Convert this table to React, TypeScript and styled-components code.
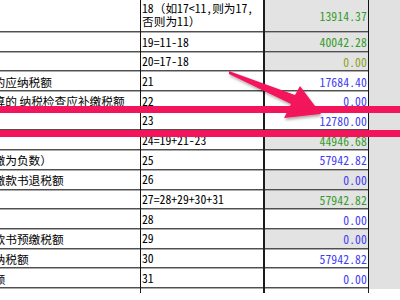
import React from "react";
import styled, { createGlobalStyle } from "styled-components";

const Global = createGlobalStyle`
  html, body { margin: 0; padding: 0; background: #ffffff; overflow: hidden; }
  #root { width: 400px; height: 300px; }
`;

const FONT = `"Noto Sans CJK SC", "Noto Sans", sans-serif`;

const Viewport = styled.div`
  position: relative;
  width: 400px;
  height: 300px;
  overflow: hidden;
  background: #ffffff;
`;

const Sheet = styled.div`
  display: flex;
  flex-direction: column;
  width: 504px;
  margin-left: -104px;
  margin-top: -1px;
  font-family: ${FONT};
  font-size: 11.7px;
  color: #000;
`;

const Row = styled.div<{ $h: number }>`
  display: grid;
  grid-template-columns: 245px 124px 104px 1fr;
  height: ${(p) => p.$h}px;
`;

const Cell = styled.div`
  box-sizing: border-box;
  display: flex;
  align-items: center;
  overflow: hidden;
  white-space: nowrap;
  box-shadow: inset 0 -1px 0 #ababab, inset 0 -2px 0 #4f4f4f;
  padding-bottom: 2px;
`;

const LabelCell = styled(Cell)`
  padding-left: 4px;
  border-right: 1px solid #141414;
`;

const CodeCell = styled(Cell)`
  padding-left: 1px;
  border-right: 2px solid #1c1c1c;
  white-space: pre-line;
  line-height: 12.6px;
  font-feature-settings: "hwid" 1;
`;

const Wide = styled.span`
  font-feature-settings: normal;
`;

const ValueCell = styled(Cell)<{ $shaded: boolean; $tone: string }>`
  justify-content: flex-end;
  padding-right: 1px;
  border-right: 1px solid #141414;
  background: ${(p) => (p.$shaded ? "#e3e3e3" : "#ffffff")};
  color: ${(p) => p.$tone};
  font-feature-settings: "hwid" 1;
  letter-spacing: 0.1px;
`;

const RestCell = styled.div`
  background: #e1e1e1;
`;

const TailRow = styled.div`
  display: grid;
  grid-template-columns: 245px 124px 104px 1fr;
  height: 4px;
`;

const TailCell = styled.div<{ $w: number }>`
  border-right: ${(p) => p.$w}px solid #1c1c1c;
`;

const Overlay = styled.svg`
  position: absolute;
  left: 0;
  top: 0;
  width: 400px;
  height: 300px;
  pointer-events: none;
`;

const GREEN = "#349b2c";
const OLIVE = "#8f9f1e";
const BLUE = "#3d3df2";

type RowData = {
  label: string;
  code: string;
  value: string;
  tone: string;
  shaded?: boolean;
  tall?: boolean;
};

const rows: RowData[] = [
  { label: "实际抵扣税额", code: "18（如17<11,则为17,\n否则为11）", value: "13914.37", tone: GREEN, shaded: true, tall: true },
  { label: "应纳税额", code: "19=11-18", value: "40042.28", tone: GREEN, shaded: true },
  { label: "期末留抵税额", code: "20=17-18", value: "0.00", tone: OLIVE, shaded: true },
  { label: "简易计税办法计算的应纳税额", code: "21", value: "17684.40", tone: BLUE },
  { label: "按简易计税办法计算的 纳税检查应补缴税额", code: "22", value: "0.00", tone: BLUE },
  { label: "应纳税额减征额", code: "23", value: "12780.00", tone: BLUE },
  { label: "应纳税额合计", code: "24=19+21-23", value: "44946.68", tone: GREEN, shaded: true },
  { label: "期初未缴税额（多缴为负数）", code: "25", value: "57942.82", tone: BLUE },
  { label: "实收出口开具专用缴款书退税额", code: "26", value: "0.00", tone: BLUE, shaded: true },
  { label: "本期已缴税额", code: "27=28+29+30+31", value: "57942.82", tone: GREEN, shaded: true },
  { label: "①分次预缴税额", code: "28", value: "0.00", tone: BLUE },
  { label: "②出口开具专用缴款书预缴税额", code: "29", value: "0.00", tone: BLUE, shaded: true },
  { label: "③本期缴纳上期应纳税额", code: "30", value: "57942.82", tone: BLUE },
  { label: "④本期缴纳欠缴税额", code: "31", value: "0.00", tone: BLUE },
];

function renderCode(code: string) {
  return code.split(/([（）])/).map((part, i) =>
    part === "（" || part === "）" ? <Wide key={i}>{part}</Wide> : <React.Fragment key={i}>{part}</React.Fragment>
  );
}

const PINK = "#f3155c";

export default function App() {
  return (
    <Viewport>
      <Global />
      <Sheet>
        {rows.map((r) => (
          <Row key={r.code} $h={r.tall ? 34 : 19.7}>
            <LabelCell>{r.label}</LabelCell>
            <CodeCell>
              <span>{renderCode(r.code)}</span>
            </CodeCell>
            <ValueCell $shaded={!!r.shaded} $tone={r.tone}>
              {r.value}
            </ValueCell>
            <RestCell />
          </Row>
        ))}
        <TailRow>
          <TailCell $w={1} />
          <TailCell $w={2} />
          <TailCell $w={1} />
        </TailRow>
      </Sheet>
      <Overlay viewBox="0 0 400 300">
        <defs>
          <filter id="shadow" x="-20%" y="-20%" width="140%" height="160%">
            <feDropShadow dx="1" dy="2" stdDeviation="1.5" floodColor="#000" floodOpacity="0.35" />
          </filter>
        </defs>
        <polygon
          points="229,71 295,95 300,86 321,114 284,118 291,104 229,74"
          fill={PINK}
          filter="url(#shadow)"
        />
        <rect x="0" y="106" width="400" height="7" fill={PINK} />
        <rect x="0" y="130" width="400" height="7" fill={PINK} />
      </Overlay>
    </Viewport>
  );
}
